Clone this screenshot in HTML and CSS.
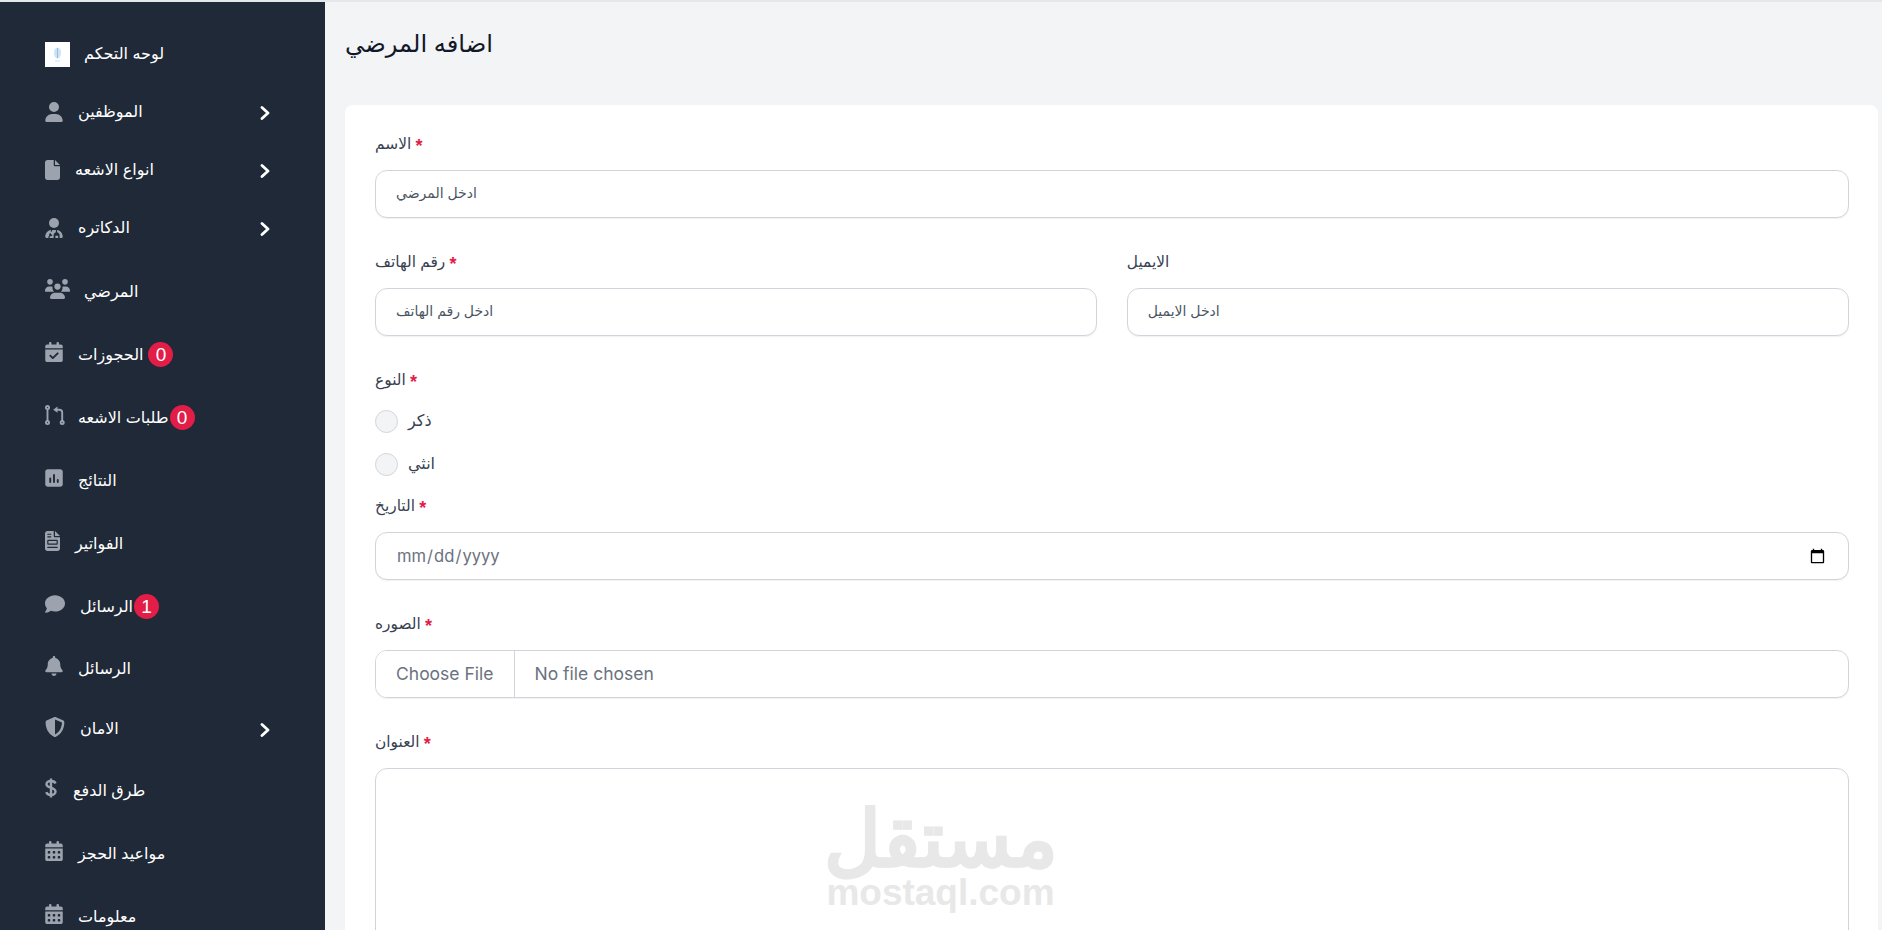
FILE: index.html
```html
<!DOCTYPE html>
<html lang="ar">
<head>
<meta charset="utf-8">
<title>اضافه المرضي</title>
<link rel="stylesheet" href="styles.css">
</head>
<body>
<aside class="sidebar">
  <a class="item item--sub"><span class="logo"><svg width="9" height="15" viewBox="0 0 9 15"><ellipse cx="4.5" cy="6" rx="3.5" ry="5.5" fill="#cfe3f5"/><path d="M4.5 1v10" stroke="#8fc1e8" stroke-width="1"/><path d="M2 14h5" stroke="#cfe3f5" stroke-width="1"/></svg></span><span class="txt">لوحه التحكم</span></a>
  <a class="item item--sub"><svg class="ico ico--18" viewBox="0 0 448 512"><path d="M224 256A128 128 0 1 0 224 0a128 128 0 1 0 0 256zm-45.7 48C79.8 304 0 383.8 0 482.3C0 498.7 13.3 512 29.7 512H418.3c16.4 0 29.7-13.3 29.7-29.7C448 383.8 368.2 304 269.7 304H178.3z"/></svg><span class="txt">الموظفين</span><svg class="chev" viewBox="0 0 10 14"><path d="M2 1.500l6 5.500-6 5.500"/></svg></a>
  <a class="item item--sub"><svg class="ico ico--15" viewBox="0 0 384 512"><path d="M0 64C0 28.7 28.7 0 64 0H224V128c0 17.7 14.3 32 32 32H384V448c0 35.3-28.7 64-64 64H64c-35.3 0-64-28.7-64-64V64zm384 64H256V0L384 128z"/></svg><span class="txt">انواع الاشعه</span><svg class="chev" viewBox="0 0 10 14"><path d="M2 1.500l6 5.500-6 5.500"/></svg></a>
  <a class="item item--sub"><svg class="ico ico--18" viewBox="0 0 448 512"><path d="M224 256A128 128 0 1 0 224 0a128 128 0 1 0 0 256z"/><path d="M0 482c0-90 60-162 144-176v74c-26 8-44 30-44 56 0 6 1 12 3 18-14 6-23 18-23 30v28H30c-16 0-30-14-30-30zM176 304h96v60c-34 10-58 42-58 78v70H112v-28c0-10 10-18 22-18 20 0 36-6 46-16l-12-26c-26-10-36-26-36-44 0-22 18-36 44-36zM304 306c84 14 144 86 144 176 0 16-14 30-30 30h-50v-70c0-36-24-68-64-78zM330 512v-60h-70v60z"/></svg><span class="txt">الدكاتره</span><svg class="chev" viewBox="0 0 10 14"><path d="M2 1.500l6 5.500-6 5.500"/></svg></a>
  <a class="item item--gap"><svg class="ico ico--25" viewBox="0 0 640 512"><circle cx="128" cy="72" r="72"/><circle cx="512" cy="72" r="72"/><circle cx="320" cy="192" r="80"/><path d="M0 298c0-58 48-106 106-106h44c16 0 32 4 46 10-4 10-4 20-4 30 0 38 16 72 42 96H22c-12 0-22-10-22-30z"/><path d="M618 328H406c26-24 42-58 42-96 0-10 0-20-4-30 14-6 30-10 46-10h44c58 0 106 48 106 106 0 20-10 30-22 30z"/><path d="M128 482c0-74 58-130 130-130h124c72 0 130 56 130 130 0 16-14 30-30 30H158c-16 0-30-14-30-30z"/></svg><span class="txt">المرضي</span></a>
  <a class="item"><svg class="ico ico--18" viewBox="0 0 448 512"><path d="M128 0c17.7 0 32 14.3 32 32V64H288V32c0-17.7 14.3-32 32-32s32 14.3 32 32V64h48c26.5 0 48 21.5 48 48v48H0V112C0 85.5 21.5 64 48 64H96V32c0-17.7 14.3-32 32-32zM0 192H448V464c0 26.5-21.5 48-48 48H48c-26.5 0-48-21.5-48-48V192z"/><path class="cut" d="M130 350l62 62 126-122"/></svg><span class="txt">الحجوزات</span><span class="badge">0</span></a>
  <a class="item"><svg class="ico ico--pull" viewBox="0 0 512 512"><g class="line"><circle cx="64" cy="64" r="40"/><circle cx="64" cy="448" r="40"/><circle cx="440" cy="448" r="40"/><path d="M64 104v304M440 408V190c0-40-30-70-70-70h-80"/></g><path d="M320 40v160L210 120z"/></svg><span class="txt">طلبات الاشعه</span><span class="badge badge--tight">0</span></a>
  <a class="item"><svg class="ico ico--18" viewBox="0 0 448 512"><path d="M64 32C29 32 0 61 0 96V416c0 35 29 64 64 64H384c35 0 64-29 64-64V96c0-35-29-64-64-64H64z"/><g class="bars"><path d="M128 264v96M224 176v184M320 304v56"/></g></svg><span class="txt">النتائج</span></a>
  <a class="item"><svg class="ico ico--15" viewBox="0 0 384 512"><path d="M64 0C29 0 0 29 0 64V448c0 35 29 64 64 64H320c35 0 64-29 64-64V160H256c-18 0-32-14-32-32V0H64zM384 128L256 0V128H384z"/><g class="bars bars--thin"><path d="M72 84h76M72 150h76M72 420h240"/></g><rect class="cut-rect" x="72" y="240" width="240" height="96" rx="8"/></svg><span class="txt">الفواتير</span></a>
  <a class="item"><svg class="ico ico--comment" viewBox="0 0 512 512"><path d="M512 240c0 114.9-114.6 208-256 208c-37.1 0-72.3-6.4-104.1-17.9c-11.9 8.7-31.3 20.6-54.3 30.6C73.6 471.1 44.7 480 16 480c-6.5 0-12.3-3.9-14.8-9.9c-2.5-6-1.1-12.8 3.4-17.4l0 0 0 0 0 0 0 0 .3-.3c.3-.3 .7-.7 1.3-1.4c1.1-1.2 2.8-3.1 4.9-5.7c4.1-5 9.6-12.4 15.2-21.6c10-16.6 19.5-38.4 21.4-62.9C17.7 326.8 0 285.1 0 240C0 125.1 114.6 32 256 32s256 93.1 256 208z"/></svg><span class="txt">الرسائل</span><span class="badge badge--tight">1</span></a>
  <a class="item item--h61"><svg class="ico ico--18" viewBox="0 0 448 512"><path d="M224 0c-17.7 0-32 14.3-32 32V51.2C119 66 64 130.6 64 208v18.8c0 47-17.3 92.4-48.5 127.6l-7.4 8.3c-8.4 9.4-10.4 22.9-5.3 34.4S19.4 416 32 416H416c12.6 0 24-7.4 29.2-18.9s3.1-25-5.3-34.4l-7.4-8.3C401.3 319.2 384 273.9 384 226.8V208c0-77.4-55-142-128-156.8V32c0-17.7-14.3-32-32-32zm45.3 493.3c12-12 18.7-28.3 18.7-45.3H224 160c0 17 6.7 33.3 18.7 45.3s28.3 18.7 45.3 18.7s33.3-6.7 45.3-18.7z"/></svg><span class="txt">الرسائل</span></a>
  <a class="item item--h60"><svg class="ico ico--shield" viewBox="0 0 512 512"><path d="M256 0c5 0 9 1 13 3l188 80c22 9 38 31 38 56 0 100-41 282-214 365-16 8-36 8-52 0C56 421 15 239 15 139c0-25 16-47 38-56L243 3c4-2 8-3 13-3z"/><path class="inner" d="M256 64v384c134-66 176-212 178-306z"/></svg><span class="txt">الامان</span><svg class="chev" viewBox="0 0 10 14"><path d="M2 1.500l6 5.500-6 5.500"/></svg></a>
  <a class="item"><svg class="ico ico--12" viewBox="0 0 12 20"><path class="dollar" d="M10.500 5.500C10 4 8.200 3 6 3 3.500 3 1.500 4.200 1.500 6.200c0 4.300 9 2.600 9 7.400 0 2-2 3.400-4.500 3.400-2.500 0-4.200-1.100-4.700-2.800M6 .5v19"/></svg><span class="txt">طرق الدفع</span></a>
  <a class="item"><svg class="ico ico--18" viewBox="0 0 448 512"><path d="M128 0c17.7 0 32 14.3 32 32V64H288V32c0-17.7 14.3-32 32-32s32 14.3 32 32V64h48c26.5 0 48 21.5 48 48v48H0V112C0 85.5 21.5 64 48 64H96V32c0-17.7 14.3-32 32-32zM0 192H448V464c0 26.500-21.500 48-48 48H48c-26.500 0-48-21.500-48-48V192zm64 80v32c0 8.800 7.200 16 16 16h32c8.800 0 16-7.200 16-16V272c0-8.800-7.200-16-16-16H80c-8.800 0-16 7.200-16 16zm128 0v32c0 8.800 7.200 16 16 16h32c8.800 0 16-7.200 16-16V272c0-8.800-7.200-16-16-16H208c-8.800 0-16 7.200-16 16zm144-16c-8.800 0-16 7.200-16 16v32c0 8.800 7.200 16 16 16h32c8.800 0 16-7.200 16-16V272c0-8.800-7.200-16-16-16H336zM64 400v32c0 8.800 7.200 16 16 16h32c8.800 0 16-7.200 16-16V400c0-8.800-7.200-16-16-16H80c-8.800 0-16 7.200-16 16zm144-16c-8.800 0-16 7.200-16 16v32c0 8.800 7.200 16 16 16h32c8.800 0 16-7.200 16-16V400c0-8.800-7.200-16-16-16H208zm112 16v32c0 8.800 7.200 16 16 16h32c8.800 0 16-7.200 16-16V400c0-8.800-7.200-16-16-16H336c-8.800 0-16 7.200-16 16z"/></svg><span class="txt">مواعيد الحجز</span></a>
  <a class="item"><svg class="ico ico--18" viewBox="0 0 448 512"><path d="M128 0c17.7 0 32 14.3 32 32V64H288V32c0-17.7 14.3-32 32-32s32 14.3 32 32V64h48c26.5 0 48 21.5 48 48v48H0V112C0 85.5 21.5 64 48 64H96V32c0-17.7 14.3-32 32-32zM0 192H448V464c0 26.500-21.500 48-48 48H48c-26.500 0-48-21.500-48-48V192zm64 80v32c0 8.800 7.200 16 16 16h32c8.800 0 16-7.200 16-16V272c0-8.800-7.200-16-16-16H80c-8.800 0-16 7.200-16 16zm128 0v32c0 8.800 7.200 16 16 16h32c8.800 0 16-7.200 16-16V272c0-8.800-7.200-16-16-16H208c-8.800 0-16 7.200-16 16zm144-16c-8.800 0-16 7.200-16 16v32c0 8.800 7.200 16 16 16h32c8.800 0 16-7.200 16-16V272c0-8.800-7.200-16-16-16H336zM64 400v32c0 8.800 7.200 16 16 16h32c8.800 0 16-7.200 16-16V400c0-8.800-7.200-16-16-16H80c-8.800 0-16 7.200-16 16zm144-16c-8.800 0-16 7.200-16 16v32c0 8.800 7.200 16 16 16h32c8.800 0 16-7.200 16-16V400c0-8.800-7.200-16-16-16H208zm112 16v32c0 8.800 7.200 16 16 16h32c8.800 0 16-7.200 16-16V400c0-8.800-7.200-16-16-16H336c-8.800 0-16 7.200-16 16z"/></svg><span class="txt">معلومات</span></a>
</aside>
<main class="main">
  <h1 class="title">اضافه المرضي</h1>
  <form class="card">
    <div class="field">
      <label class="lbl">الاسم <span class="req">*</span></label>
      <input class="ctl" type="text" placeholder="ادخل المرضي">
    </div>
    <div class="cols">
      <div class="field">
        <label class="lbl">رقم الهاتف <span class="req">*</span></label>
        <input class="ctl" type="text" placeholder="ادخل رقم الهاتف">
      </div>
      <div class="field">
        <label class="lbl">الايميل</label>
        <input class="ctl" type="text" placeholder="ادخل الايميل">
      </div>
    </div>
    <div class="field field--radios">
      <label class="lbl">النوع <span class="req">*</span></label>
      <label class="radio"><input class="rad" type="radio" name="g"><span>ذكر</span></label>
      <label class="radio"><input class="rad" type="radio" name="g"><span>انثي</span></label>
    </div>
    <div class="field">
      <label class="lbl">التاريخ <span class="req">*</span></label>
      <input class="ctl ctl--date" type="date">
    </div>
    <div class="field">
      <label class="lbl">الصوره <span class="req">*</span></label>
      <input class="ctl ctl--file" type="file">
    </div>
    <div class="field">
      <label class="lbl">العنوان <span class="req">*</span></label>
      <textarea class="ctl ctl--area"></textarea>
    </div>
    <div class="mark"><span class="mark-ar">مستقل</span><span class="mark-en">mostaql.com</span></div>
  </form>
</main>
</body>
</html>
```
FILE: styles.css
```css
* { box-sizing: border-box; }
html, body { margin: 0; height: 930px; overflow: hidden; }
body {
  display: flex;
  background: #f3f4f6;
  border-top: 2px solid #e5e7eb;
  font-family: "Liberation Sans", "DejaVu Sans", sans-serif;
  color: #1f2937;
}
.sidebar {
  flex: 0 0 325px;
  height: 928px;
  padding: 23px 0 0 45px;
  background: #1f2937;
  overflow: hidden;
}
.item {
  display: flex;
  align-items: center;
  height: 63px;
  color: #fff;
  font-size: 16px;
}
.item--sub { height: 58px; }
.item--gap { margin-top: 3px; }
.item--h61 { height: 61px; }
.item--h60 { height: 60px; }
.txt { padding-bottom: 1px; }
.logo {
  width: 25px;
  height: 25px;
  background: #fff;
  display: flex;
  align-items: center;
  justify-content: center;
  margin-right: 14px;
}
.ico { fill: #9ca3af; flex: none; margin: 0 15px 5px 0; display: block; }
.item--sub .ico { margin-bottom: 0; }
.ico--12 { width: 12px; height: 20px; margin-right: 16px; }
.ico--15 { width: 15px; height: 20px; }
.ico--18 { width: 18px; height: 20px; }
.ico--pull { width: 20px; height: 20px; margin-right: 13px; }
.ico--comment { width: 20px; height: 20px; }
.ico--shield { width: 20px; height: 20px; }
.ico--25 { width: 25px; height: 20px; margin-right: 14px; }
.cut { fill: none; stroke: #1f2937; stroke-width: 48; stroke-linecap: round; stroke-linejoin: round; }
.line { fill: none; stroke: #9ca3af; stroke-width: 48; }
.bars { fill: none; stroke: #1f2937; stroke-width: 48; stroke-linecap: round; }
.bars--thin { stroke-width: 30; }
.cut-rect { fill: none; stroke: #1f2937; stroke-width: 30; }
.inner { fill: #1f2937; }
.dollar { fill: none; stroke: #9ca3af; stroke-width: 2.4; }
.chev { width: 10px; height: 14px; margin: 2px 55px 0 auto; flex: none; }
.chev path { fill: none; stroke: #fff; stroke-width: 2.8; stroke-linecap: round; stroke-linejoin: round; }
.badge {
  width: 25px;
  height: 25px;
  border-radius: 50%;
  background: #e11d48;
  color: #fff;
  font-size: 19px;
  line-height: 25px;
  text-align: center;
  margin-left: 5px;
}
.badge--tight { margin-left: 1px; }
.main { flex: 1; padding: 24px 4px 0 20px; min-width: 0; }
.title {
  margin: 0 0 43px;
  height: 36px;
  font-size: 24.2px;
  line-height: 36px;
  font-weight: 400;
  color: #111827;
}
.card {
  position: relative;
  background: #fff;
  border-radius: 8px;
  padding: 27px 29.5px 0 30px;
  height: 900px;
  display: flex;
  flex-direction: column;
  gap: 32px;
}
.cols { display: grid; grid-template-columns: 1fr 1fr; gap: 30px; }
.field { display: flex; flex-direction: column; }
.lbl { height: 22px; line-height: 24px; margin-bottom: 16px; font-size: 15.4px; color: #374151; }
.req { color: #e11d48; font-size: 18px; font-weight: 700; line-height: 1; vertical-align: -3px; }
.ctl {
  height: 48px;
  width: 100%;
  border: 1px solid #d1d5db;
  border-radius: 12px;
  background: #fff;
  box-shadow: 0 1px 1px rgba(0, 0, 0, .06);
  padding: 0 20px 2px;
  font-family: "Liberation Sans", "DejaVu Sans", sans-serif;
  font-size: 14px;
  color: #4b5563;
  outline: none;
}
.ctl::placeholder { color: #4b5563; opacity: 1; }
.ctl--date { font-family: Inter, sans-serif; font-size: 16.6px; color: #6b7280; padding-bottom: 0; }
.ctl--file { font-family: Inter, sans-serif; font-size: 17.5px; color: #6b7280; padding: 0; line-height: 46px; }
.ctl--file::file-selector-button {
  height: 46px;
  margin: 0 20px 0 0;
  padding: 0 20px;
  border: 0;
  border-right: 1px solid #d1d5db;
  background: #fff;
  color: #6b7280;
  font: inherit;
}
.ctl--area { height: 300px; resize: none; display: block; }
.field--radios { margin-bottom: -14px; }
.field--radios .lbl { margin-bottom: 20px; }
.radio { display: flex; align-items: center; gap: 10px; height: 23px; margin-bottom: 20px; font-size: 16px; color: #374151; }
.radio span { padding-bottom: 2px; }
.radio:last-child { margin-bottom: 0; }
.rad {
  appearance: none;
  width: 23px;
  height: 23px;
  margin: 0;
  border: 1px solid #d1d5db;
  border-radius: 50%;
  background: #f3f4f6;
}
.mark {
  position: absolute;
  left: 483px;
  top: 691px;
  width: 225px;
  color: #e8e8e8;
  display: flex;
  flex-direction: column;
  align-items: center;
  pointer-events: none;
}
.mark-ar {
  font-family: "Liberation Sans", sans-serif;
  font-weight: 700;
  font-size: 78px;
  line-height: 87px;
  -webkit-text-stroke: 1px #e8e8e8;
}
.mark-en { font-family: "Liberation Sans", sans-serif; font-weight: 700; font-size: 37px; line-height: 42px; margin-top: -11px; }
```
